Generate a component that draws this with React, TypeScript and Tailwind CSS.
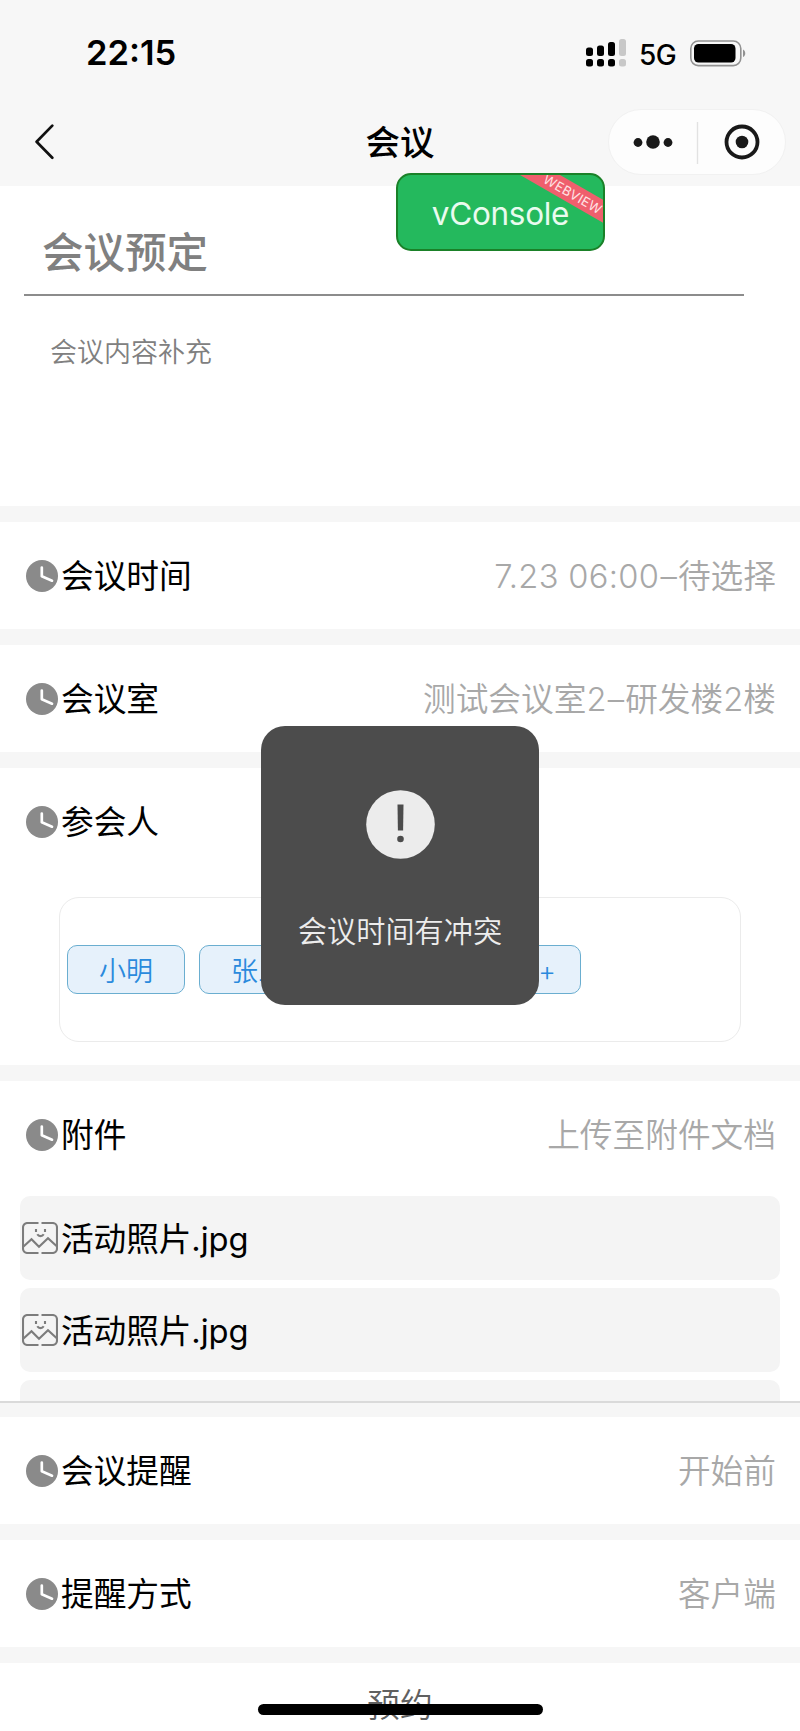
import type { ReactNode } from 'react';

function ClockIcon() {
  return (
    <svg className="h-8 w-8 shrink-0" viewBox="0 0 32 32" fill="none">
      <circle cx="16" cy="16" r="16" fill="#8a8a8a" />
      <path d="M15.8 7.5V16.3L26 20.7" stroke="#fff" strokeWidth="2.7" strokeLinecap="round" strokeLinejoin="round" />
    </svg>
  );
}

function PictureIcon() {
  return (
    <svg className="h-8 w-9 shrink-0" viewBox="0 0 36 32" fill="none" stroke="#7c7c7c" strokeWidth="2.1">
      <path d="M16.5 1H5.5A4.5 4.5 0 0 0 1 5.5V26.5A4.5 4.5 0 0 0 5.5 31H16.5" />
      <path d="M19.5 1H30.5A4.5 4.5 0 0 1 35 5.5V26.5A4.5 4.5 0 0 1 30.5 31H19.5" />
      <path d="M1.5 24.5L9.5 17.2L17 24.8L26 16.2L34.5 24" />
      <path d="M14 7V10M23 7V10" />
      <path d="M15.3 12.2C16.8 14.8 20.2 14.8 21.7 12.2" />
    </svg>
  );
}

function StatusBar() {
  return (
    <div className="flex h-[98px] items-center justify-between pl-[86px] pr-[54px] pt-2">
      <span className="mt-px text-[34.5px] font-semibold leading-none text-black">22:15</span>
      <div className="flex items-center">
        <svg className="mr-[13px] h-7 w-10" viewBox="0 0 40 28">
          <g fill="#000">
            <rect x="0" y="8.5" width="7" height="8.5" rx="2.5" />
            <rect x="11" y="6.5" width="7" height="10.5" rx="2.5" />
            <rect x="22" y="3" width="7" height="14" rx="2.5" />
            <rect x="0" y="20" width="7" height="7.5" rx="2.5" />
            <rect x="11" y="20" width="7" height="7.5" rx="2.5" />
            <rect x="22" y="20" width="7" height="7.5" rx="2.5" />
          </g>
          <g fill="#c8c8c8">
            <rect x="33" y="0" width="7" height="17" rx="2.5" />
            <rect x="33" y="20" width="7" height="7.5" rx="2.5" />
          </g>
        </svg>
        <span className="mr-[14px] mt-[3px] w-[37px] text-[28px] font-medium leading-none tracking-[-0.5px] text-black">5G</span>
        <svg className="h-[27px] w-14" viewBox="0 0 56 27">
          <rect x="0.8" y="1" width="50" height="24.6" rx="7.5" fill="none" stroke="#929292" strokeWidth="1.6" />
          <rect x="4" y="4" width="41.5" height="18.6" rx="4.5" fill="#000" />
          <path d="M53 9.5C56 10.8 56 15.8 53 17Z" fill="#929292" />
        </svg>
      </div>
    </div>
  );
}

function NavBar() {
  return (
    <div className="grid h-[88px] grid-cols-3 items-center">
      <svg className="ml-[34px] h-9 w-5" viewBox="0 0 20 36" fill="none" stroke="#111" strokeWidth="2.7" strokeLinecap="round" strokeLinejoin="round">
        <path d="M18.3 1.6L2.6 17.7L18.3 33.8" />
      </svg>
      <h1 className="mt-0.5 text-center text-[34.5px] font-medium leading-none text-black">会议</h1>
      <div className="mr-[14px] flex h-[66px] w-[178px] items-center justify-self-end rounded-full border border-[#f1f1f1] bg-[#fdfdfd]">
        <svg className="h-full w-full" viewBox="0 0 176 64">
          <g fill="#191919">
            <circle cx="29" cy="32.5" r="4.4" />
            <circle cx="44" cy="32" r="6.8" />
            <circle cx="59" cy="32.5" r="4.4" />
            <circle cx="133" cy="32" r="6.3" />
          </g>
          <circle cx="133" cy="32" r="15.5" fill="none" stroke="#191919" strokeWidth="3.8" />
          <path d="M88.5 12V54" stroke="#e2e2e2" strokeWidth="1.4" />
        </svg>
      </div>
    </div>
  );
}

function VConsoleButton() {
  return (
    <button className="absolute left-[396px] top-[173px] flex h-[78px] w-[209px] items-center justify-center overflow-hidden rounded-[15px] border-2 border-[#1a8128] bg-[#24b95d]">
      <span className="mt-1 text-[31.5px] leading-none tracking-[-0.3px] text-[#e9fbef]">vConsole</span>
      <span className="absolute left-[100px] top-[9px] flex h-5 w-[150px] rotate-30 items-center justify-center bg-[#ef5f6d] text-[13px] leading-none tracking-[0.4px] text-[#ffe4e6]">
        WEBVIEW
      </span>
    </button>
  );
}

// Digits and dashes sit a little looser than the Chinese around them
function ValueText({ text }: { text: string }) {
  return (
    <span className="ml-auto mt-0.5 text-[32.7px] font-[350] text-[#a8a8a8]">
      {text.split(/(–)/).map((part, i) =>
        part === '–' ? (
          <span key={i} className="px-[1.2px]">–</span>
        ) : (
          <span key={i} className={/^[\d.: ]+$/.test(part) ? 'tracking-[0.3px]' : ''}>{part}</span>
        )
      )}
    </span>
  );
}

function Row({ label, value }: { label: string; value?: string }) {
  return (
    <div className="flex h-[107px] items-center pl-[26px] pr-6 leading-none">
      <ClockIcon />
      <span className="ml-[3px] mt-0.5 text-[32.7px] text-black">{label}</span>
      {value && <ValueText text={value} />}
    </div>
  );
}

function Section({ children, className = '' }: { children: ReactNode; className?: string }) {
  return <section className={`shrink-0 bg-white ${className}`}>{children}</section>;
}

function Tag({ children, className = 'justify-center' }: { children: ReactNode; className?: string }) {
  return (
    <span className={`flex h-[49px] w-[118px] items-center rounded-[10px] border border-[#6aaed0] bg-[#e6f1fb] pt-[3px] text-[27px] leading-none font-[350] text-[#2a8add] ${className}`}>
      {children}
    </span>
  );
}

function FileItem({ name }: { name: string }) {
  return (
    <div className="flex h-[84px] shrink-0 items-center rounded-[10px] bg-[#f4f4f4] pl-0.5 leading-none">
      <PictureIcon />
      <span className="ml-[3px] mt-0.5 text-[32.7px] tracking-[-0.1px] text-black">{name}</span>
    </div>
  );
}

function Toast({ message }: { message: string }) {
  return (
    <div className="absolute left-[261px] top-[726px] flex h-[279px] w-[278px] flex-col items-center rounded-[24px] bg-[#4c4c4c]">
      <svg className="mt-16 h-[69px] w-[69px]" viewBox="0 0 69 69">
        <circle cx="34.5" cy="34.5" r="34.3" fill="#ececec" />
        <path d="M31.5 14.5H37.5L37.1 40.5H31.9Z" fill="#4c4c4c" />
        <circle cx="34.5" cy="49" r="3.3" fill="#4c4c4c" />
      </svg>
      <p className="mt-[58px] whitespace-nowrap text-[29.2px] font-[350] leading-none text-[#ededed]">{message}</p>
    </div>
  );
}

export default function App() {
  return (
    <div className="relative flex h-[1731px] w-[800px] flex-col overflow-hidden bg-[#f6f6f6] font-['Inter','Noto_Sans_CJK_SC',sans-serif]">
      <header className="h-[186px] shrink-0 bg-[#f7f7f7]">
        <StatusBar />
        <NavBar />
      </header>

      <main className="flex flex-col gap-4">
        <Section className="h-80">
          <div className="ml-6 flex h-[110px] w-[720px] items-center border-b-2 border-[#8c8c8c] pl-[18px] pt-7">
            <h2 className="text-[41.5px] font-medium leading-none text-[#808080]">会议预定</h2>
          </div>
          <p className="ml-[50px] mt-[43px] text-[27px] font-[350] leading-none text-[#808080]">会议内容补充</p>
        </Section>

        <Section>
          <Row label="会议时间" value="7.23 06:00–待选择" />
        </Section>

        <Section>
          <Row label="会议室" value="测试会议室2–研发楼2楼" />
        </Section>

        <Section className="h-[297px]">
          <Row label="参会人" />
          <div className="mx-[59px] mt-[22px] flex h-[145px] items-center gap-3.5 rounded-[20px] border border-[#ebebeb] pl-[7px]">
            <Tag>小明</Tag>
            <Tag>张三</Tag>
            <Tag>李四</Tag>
            <Tag className="justify-end pr-6">+</Tag>
          </div>
        </Section>

        <Section className="h-[322px] border-b-2 border-[#dadada]">
          <Row label="附件" value="上传至附件文档" />
          <div className="mx-5 mt-2 flex h-[205px] flex-col gap-2 overflow-hidden">
            <FileItem name="活动照片.jpg" />
            <FileItem name="活动照片.jpg" />
            <div className="h-[84px] shrink-0 rounded-[10px] bg-[#f4f4f4]" />
          </div>
        </Section>

        <Section className="-mt-0.5">
          <Row label="会议提醒" value="开始前" />
        </Section>

        <Section>
          <Row label="提醒方式" value="客户端" />
        </Section>

        <Section className="h-20 pt-[26px] text-center">
          <span className="text-[32.7px] font-[350] leading-none text-[#606060]">预约</span>
        </Section>
      </main>

      <VConsoleButton />
      <Toast message="会议时间有冲突" />
      <div className="absolute left-[258px] top-[1704px] h-[11px] w-[285px] rounded-full bg-black" />
    </div>
  );
}
